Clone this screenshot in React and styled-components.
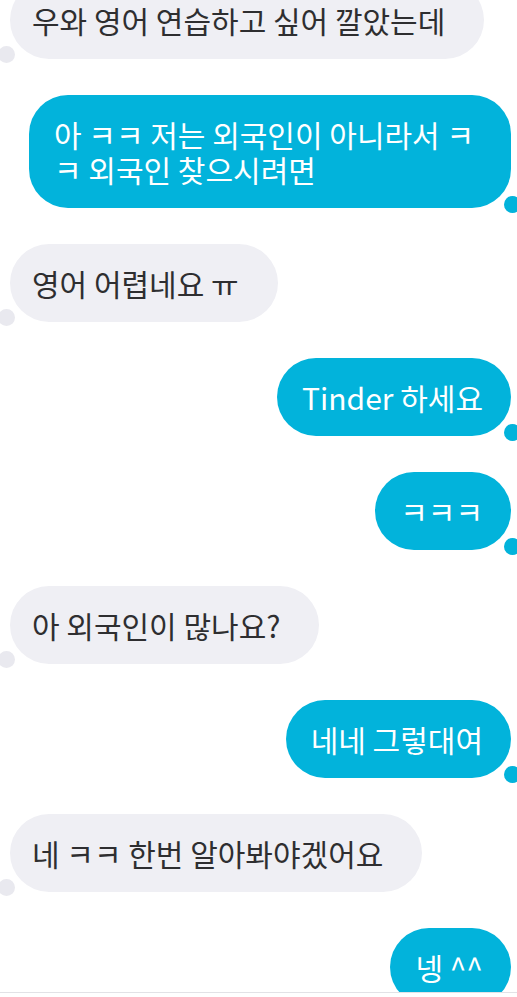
import React from 'react'
import styled, { createGlobalStyle } from 'styled-components'

const GlobalStyle = createGlobalStyle`
  html, body {
    margin: 0;
    padding: 0;
    background: #ffffff;
    overflow: hidden;
  }
  body {
    font-family: 'Noto Sans CJK KR', 'Liberation Sans', sans-serif;
    -webkit-font-smoothing: antialiased;
  }
`

const Thread = styled.main`
  display: flex;
  flex-direction: column;
  gap: 36px;
  margin-top: -19px;
  padding: 0 6px 0 10px;
  height: 1016px;
  overflow: hidden;
`

const Row = styled.div`
  display: flex;
  justify-content: ${p => (p.$out ? 'flex-end' : 'flex-start')};
`

const Bubble = styled.div`
  position: relative;
  box-sizing: border-box;
  max-width: 482px;
  padding: ${p => (p.$out ? '21.5px 28px 21.5px 25px' : '21.5px 39px 21.5px 22px')};
  border-radius: 39px;
  font-size: 30px;
  line-height: 35px;
  color: ${p => (p.$out ? '#ffffff' : '#2e2e30')};
  background: ${p => (p.$out ? '#02b3db' : '#efeff4')};

  &::after {
    content: '';
    position: absolute;
    width: 17px;
    height: 17px;
    border-radius: 50%;
    bottom: ${p => (p.$out ? '-5px' : '-4px')};
    ${p => (p.$out ? 'right: -10px;' : 'left: -12px;')}
    background: ${p => (p.$out ? '#02b3db' : '#e9e9ef')};
  }
`

const InputEdge = styled.div`
  position: fixed;
  left: 0;
  right: 0;
  bottom: 0;
  height: 4px;
  background: #ffffff;
  border-top: 1px solid #e2e2e6;
`

const messages = [
  { out: false, text: '우와 영어 연습하고 싶어 깔았는데' },
  { out: true, text: '아 ㅋㅋ 저는 외국인이 아니라서 ㅋㅋ 외국인 찾으시려면' },
  { out: false, text: '영어 어렵네요 ㅠ' },
  { out: true, text: 'Tinder 하세요' },
  { out: true, text: 'ㅋㅋㅋ' },
  { out: false, text: '아 외국인이 많나요?' },
  { out: true, text: '네네 그렇대여' },
  { out: false, text: '네 ㅋㅋ 한번 알아봐야겠어요' },
  { out: true, text: '넹 ^^' }
]

const App = () => (
  <>
    <GlobalStyle />
    <Thread>
      {messages.map((m, i) => (
        <Row key={i} $out={m.out}>
          <Bubble $out={m.out}>{m.text}</Bubble>
        </Row>
      ))}
    </Thread>
    <InputEdge />
  </>
)

export default App
